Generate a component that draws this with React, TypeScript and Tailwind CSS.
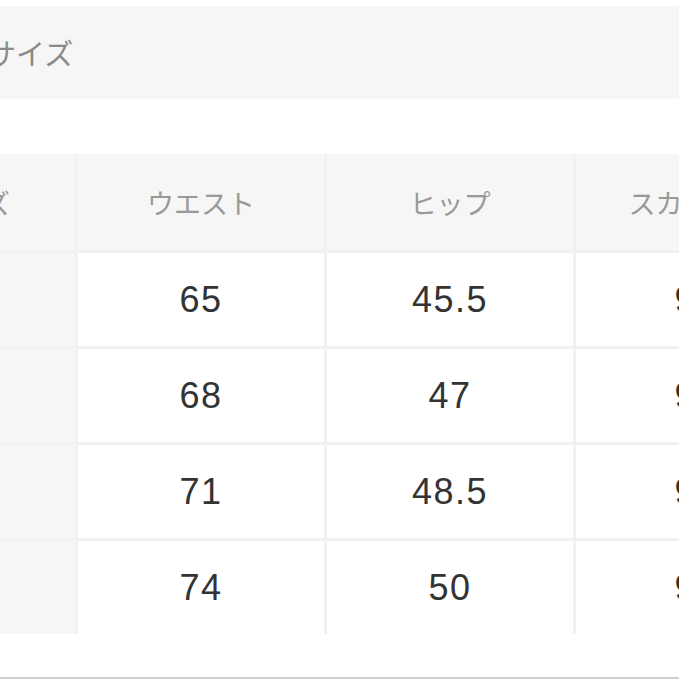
import React from "react";

const rows = [
  { s: "S", w: "65", h: "45.5", k: "94" },
  { s: "M", w: "68", h: "47", k: "96" },
  { s: "L", w: "71", h: "48.5", k: "98" },
  { s: "LL", w: "74", h: "50", k: "99" },
];

const jp = { fontFamily: '"Noto Sans CJK JP", "Noto Sans", sans-serif' };

export default function App() {
  const font = { fontFamily: '"Liberation Sans", "Noto Sans CJK JP", sans-serif' };
  return (
    <div className="w-[679px] h-[679px] overflow-hidden bg-white relative" style={font}>
      <div className="pt-[6px]">
        <div className="h-[93px] bg-[#f6f6f6] flex items-center">
          <span className="ml-[-13px] text-[29px] text-[#8a8a8a] leading-none" style={jp}>サイズ</span>
        </div>
      </div>
      <div className="mt-[55px] ml-[-135px] w-[1100px]">
        <div className="grid grid-cols-[210px_246px_246px_240px] gap-[3px] bg-[#f1f1f1] w-max">
          <div className="h-[96px] bg-[#f6f6f6] flex items-center justify-center text-[27px] text-[#999] leading-none" style={jp}>サイズ</div>
          <div className="h-[96px] bg-[#f6f6f6] flex items-center justify-center text-[27px] text-[#999] leading-none" style={jp}>ウエスト</div>
          <div className="h-[96px] bg-[#f6f6f6] flex items-center justify-center text-[27px] text-[#999] leading-none" style={jp}>ヒップ</div>
          <div className="h-[96px] bg-[#f6f6f6] flex items-center justify-center text-[27px] text-[#999] leading-none" style={jp}>スカート丈</div>
          {rows.map((r) => (
            <React.Fragment key={r.s}>
              <div className="h-[93px] bg-[#f6f6f6] flex items-center justify-center text-[30px] text-[#555]">{r.s}</div>
              <div className="h-[93px] bg-white flex items-center justify-center text-[36px] text-[#333] tracking-[1.5px]">{r.w}</div>
              <div className="h-[93px] bg-white flex items-center justify-center text-[36px] text-[#333] tracking-[1.5px]">{r.h}</div>
              <div className="h-[93px] bg-white flex items-center justify-center text-[36px] text-[#333] tracking-[1.5px]">{r.k}</div>
            </React.Fragment>
          ))}
        </div>
      </div>
      <div className="absolute left-0 right-0 bottom-0 h-[2px] bg-[#cfcfcf]" />
    </div>
  );
}
